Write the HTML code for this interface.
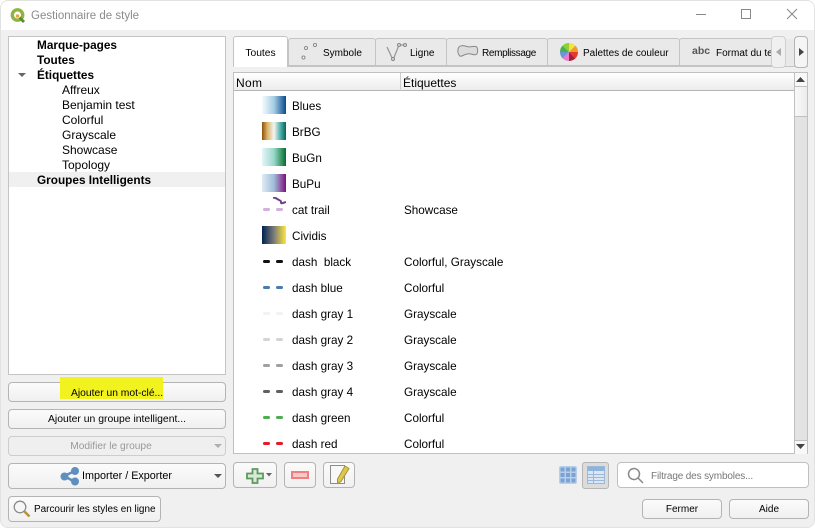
<!DOCTYPE html>
<html><head><meta charset="utf-8"><style>
html,body{margin:0;padding:0;background:#f0f0f0}
#w{position:relative;width:815px;height:528px;overflow:hidden;background:#f0f0f0;font:12px "Liberation Sans",sans-serif;color:#000}
#w div,#w svg{position:absolute}
.t{white-space:nowrap;line-height:15px}
.b{font-weight:bold;left:37px;font-size:11.8px}
.c{left:62px}
.btn{box-sizing:border-box;border:1px solid #b4b4b4;border-radius:4px;background:linear-gradient(#fbfbfb,#f0f0f0);text-align:center;white-space:nowrap}
.tab{box-sizing:border-box;height:28px;top:38px;border:1px solid #c4c4c4;border-radius:3px 3px 0 0;background:#e9e9e9;font-size:10px;line-height:30px;white-space:nowrap}
.r{left:292px;white-space:nowrap;line-height:16px;font-size:11.7px;margin-top:1px}
.l{left:404px;white-space:nowrap;line-height:16px;font-size:11.7px;margin-top:1px}
.g{left:262px;width:24px;height:18px}
.d{left:263px;height:3px;width:7px;border-radius:2px}
.d2{left:276px;height:3px;width:7px;border-radius:2px}
</style></head><body><div id="w">
<div style="left:0;top:0;width:815px;height:30px;background:#fff"></div>
<svg style="left:10px;top:8px" width="16" height="15" viewBox="0 0 16 15"><circle cx="7.500" cy="7" r="5.200" fill="#fff" stroke="#8fb440" stroke-width="3.400"/><path d="M9.500 9.500l4.500 4.500" stroke="#5e8c2c" stroke-width="2.800"/><circle cx="7.500" cy="8" r="1.800" fill="#e8a33c"/></svg>
<div class="t" style="left:31px;top:9px;color:#8b8b8b;font-size:11.5px">Gestionnaire de style</div>
<svg style="left:690px;top:8px" width="115" height="14" viewBox="0 0 115 14" fill="none" stroke="#888"><path d="M6 6.500H16"/><rect x="51.500" y="1.500" width="9" height="9"/><path d="M97 1l10 10M107 1L97 11"/></svg>

<div style="left:8px;top:36px;width:218px;height:339px;box-sizing:border-box;background:#fff;border:1px solid #c4c4c4"></div>
<div style="left:9px;top:172px;width:216px;height:15px;background:#f0f0f0"></div>
<div class="t b" style="top:38px">Marque-pages</div>
<div class="t b" style="top:53px">Toutes</div>
<div class="t b" style="top:68px">Étiquettes</div>
<svg style="left:18px;top:72px" width="8" height="6"><path d="M0 1h8L4 5z" fill="#666"/></svg>
<div class="t c" style="top:83px">Affreux</div>
<div class="t c" style="top:98px">Benjamin test</div>
<div class="t c" style="top:113px">Colorful</div>
<div class="t c" style="top:128px">Grayscale</div>
<div class="t c" style="top:143px">Showcase</div>
<div class="t c" style="top:158px">Topology</div>
<div class="t b" style="top:173px">Groupes Intelligents</div>

<div class="btn" style="left:8px;top:382px;width:218px;height:20px"></div>
<div style="left:60px;top:377px;width:103px;height:22px;background:#f2f21e"></div>
<div class="t" style="left:71px;top:386px;font-size:10.300px">Ajouter un mot-clé...</div>
<div class="btn" style="left:8px;top:409px;width:218px;height:20px;line-height:19px;font-size:10.400px">Ajouter un groupe intelligent...</div>
<div class="btn" style="left:8px;top:436px;width:218px;height:20px;line-height:20px;font-size:10.200px;color:#999;border-color:#cdcdcd;background:#efefef;padding-right:12px">Modifier le groupe</div>
<svg style="left:214px;top:444px" width="8" height="5"><path d="M0 0h8L4 4z" fill="#b0b0b0"/></svg>
<div class="btn" style="left:8px;top:463px;width:218px;height:26px"></div>
<svg style="left:60px;top:466px" width="20" height="20" viewBox="0 0 20 20"><path d="M4 10L15 5M4 10l11 6" stroke="#5f8fbf" stroke-width="2.500"/><circle cx="4.500" cy="10.500" r="4" fill="#5f8fbf"/><circle cx="15" cy="5" r="4" fill="#5f8fbf"/><circle cx="15" cy="15.500" r="4" fill="#5f8fbf"/></svg>
<div class="t" style="left:82px;top:469px;font-size:10.800px">Importer / Exporter</div>
<svg style="left:214px;top:474px" width="8" height="5"><path d="M0 0h8L4 4z" fill="#555"/></svg>
<div class="btn" style="left:8px;top:496px;width:153px;height:26px"></div>
<svg style="left:13px;top:500px" width="20" height="20" viewBox="0 0 20 20"><circle cx="7" cy="7" r="5.800" fill="#f6f6f6" stroke="#8a8a8a" stroke-width="1.300"/><path d="M11.500 11.500l5 5" stroke="#b8923c" stroke-width="2.500"/></svg>
<div class="t" style="left:34px;top:502px;font-size:9.950px">Parcourir les styles en ligne</div>

<div class="tab" style="left:288px;width:88px;padding-left:34px">Symbole</div>
<div class="tab" style="left:375px;width:72px;padding-left:34px">Ligne</div>
<div class="tab" style="left:446px;width:102px;padding-left:35px;letter-spacing:-.35px">Remplissage</div>
<div class="tab" style="left:547px;width:133px;padding-left:35px">Palettes de couleur</div>
<div class="tab" style="left:679px;width:100px;padding-left:36px">Format du te</div>
<div style="left:233px;top:66px;width:575px;height:1px;background:#c4c4c4"></div>
<div class="tab" style="left:233px;top:36px;width:55px;height:31px;background:#fff;border-bottom:0;text-align:center;line-height:34px;font-size:10.300px">Toutes</div>
<svg style="left:300px;top:42px" width="20" height="20"><g fill="#fff" stroke="#888"><circle cx="3.500" cy="15.500" r="1.500"/><circle cx="6" cy="6" r="1.500"/><circle cx="15" cy="3" r="1.500"/></g></svg>
<svg style="left:385px;top:42px" width="24" height="22" fill="none" stroke="#999"><path d="M2 5l6 13 6-15h6" stroke-width="1.300"/><g fill="#ddd" stroke="#888"><circle cx="8" cy="17" r="1.500"/><circle cx="14" cy="3" r="1.500"/><circle cx="20" cy="3" r="1.500"/></g></svg>
<svg style="left:457px;top:44px" width="22" height="15"><path d="M1 6C1 1 6 1 10 2.500S20 0 20.500 5 20 12 14 10 4 15 2 11 1 8 1 6z" fill="#dcdcdc" stroke="#888"/></svg>
<svg style="left:560px;top:43px" width="18" height="18" viewBox="0 0 18 18"><path d="M9 9V0a9 9 0 0 1 6.400 2.600z" fill="#f5e23c"/><path d="M9 9l6.400-6.400A9 9 0 0 1 18 9z" fill="#ee9a2c"/><path d="M9 9h9a9 9 0 0 1-2.600 6.400z" fill="#e8382c"/><path d="M9 9l6.400 6.400A9 9 0 0 1 9 18z" fill="#a81c3c"/><path d="M9 9v9a9 9 0 0 1-6.400-2.600z" fill="#e87cc8"/><path d="M9 9l-6.400 6.400A9 9 0 0 1 0 9z" fill="#6c94d8"/><path d="M9 9H0a9 9 0 0 1 2.600-6.400z" fill="#4cae4c"/><path d="M9 9L2.600 2.600A9 9 0 0 1 9 0z" fill="#8cd034"/></svg>
<div class="t" style="left:692px;top:44px;font-size:10.500px;font-weight:bold;color:#555">abc</div>
<div class="btn" style="left:771px;top:36px;width:15px;height:32px;background:#f0f0f0;border-color:#d0d0d0"></div>
<svg style="left:776px;top:48px" width="6" height="9"><path d="M5 0v8L0 4z" fill="#aaa"/></svg>
<div style="left:786px;top:39px;width:8px;height:27px;background:#e9e9e9"></div>
<div class="btn" style="left:794px;top:36px;width:14px;height:32px;background:#f5f5f5"></div>
<svg style="left:799px;top:48px" width="6" height="9"><path d="M0 0v8l5-4z" fill="#444"/></svg>

<div style="left:233px;top:72px;width:575px;height:382px;box-sizing:border-box;background:#fff;border:1px solid #c0c0c0"></div>
<div style="left:234px;top:73px;width:560px;height:18px;box-sizing:border-box;background:linear-gradient(#fff,#ececec);border-bottom:1px solid #b5b5b5"></div>
<div style="left:400px;top:73px;width:1px;height:18px;background:#ccc"></div>
<div class="t" style="left:236px;top:76px;letter-spacing:.3px">Nom</div>
<div class="t" style="left:403px;top:76px">Étiquettes</div>
<div style="left:794px;top:73px;width:1px;height:380px;background:#c0c0c0"></div>
<div style="left:795px;top:73px;width:12px;height:380px;background:#e3e3e3"></div>
<div style="left:795px;top:73px;width:12px;height:13px;background:#f8f8f8;border-bottom:1px solid #c0c0c0"></div>
<div style="left:795px;top:87px;width:12px;height:29px;background:linear-gradient(90deg,#f9f9f9,#ececec);border-bottom:1px solid #c0c0c0"></div>
<div style="left:795px;top:440px;width:12px;height:13px;background:#f8f8f8;border-top:1px solid #c0c0c0"></div>
<svg style="left:796px;top:77px" width="10" height="6"><path d="M0 5h9L4.500 0z" fill="#444"/></svg>
<svg style="left:796px;top:444px" width="10" height="6"><path d="M0 0h9L4.500 5z" fill="#444"/></svg>

<div class="g" style="top:96px;background:linear-gradient(90deg,#f7fbff,#a5cde3 50%,#0a4a90)"></div><div class="r" style="top:98px">Blues</div>
<div class="g" style="top:122px;background:linear-gradient(90deg,#8c510a,#d8b365 22%,#f5f5f5 50%,#5ab4ac 75%,#01665e)"></div><div class="r" style="top:124px">BrBG</div>
<div class="g" style="top:148px;background:linear-gradient(90deg,#e5f5f9,#99d8c9 50%,#006d2c)"></div><div class="r" style="top:150px">BuGn</div>
<div class="g" style="top:174px;background:linear-gradient(90deg,#e0ecf4,#9ebcda 50%,#810f7c)"></div><div class="r" style="top:176px">BuPu</div>
<svg style="left:262px;top:197px" width="24" height="8"><path d="M11 .5c3 0 4 1.500 6 2.500s2 1 2 2.500 2 .5 5 -.5" fill="none" stroke="#6f3f85" stroke-width="2"/></svg>
<div class="d" style="top:208px;background:#d4b0dc"></div><div class="d2" style="top:208px;background:#d4b0dc"></div><div class="r" style="top:202px">cat trail</div><div class="l" style="top:202px">Showcase</div>
<div class="g" style="top:226px;background:linear-gradient(90deg,#00224e,#7c7b78 50%,#fee838)"></div><div class="r" style="top:228px">Cividis</div>
<div class="d" style="top:260px;background:#111"></div><div class="d2" style="top:260px;background:#111"></div><div class="r" style="top:254px">dash&nbsp; black</div><div class="l" style="top:254px">Colorful, Grayscale</div>
<div class="d" style="top:286px;background:#4a7ab5"></div><div class="d2" style="top:286px;background:#4a7ab5"></div><div class="r" style="top:280px">dash blue</div><div class="l" style="top:280px">Colorful</div>
<div class="d" style="top:312px;background:#f2f2f2"></div><div class="d2" style="top:312px;background:#f2f2f2"></div><div class="r" style="top:306px">dash gray 1</div><div class="l" style="top:306px">Grayscale</div>
<div class="d" style="top:338px;background:#d4d4d4"></div><div class="d2" style="top:338px;background:#d4d4d4"></div><div class="r" style="top:332px">dash gray 2</div><div class="l" style="top:332px">Grayscale</div>
<div class="d" style="top:364px;background:#a0a0a0"></div><div class="d2" style="top:364px;background:#a0a0a0"></div><div class="r" style="top:358px">dash gray 3</div><div class="l" style="top:358px">Grayscale</div>
<div class="d" style="top:390px;background:#606060"></div><div class="d2" style="top:390px;background:#606060"></div><div class="r" style="top:384px">dash gray 4</div><div class="l" style="top:384px">Grayscale</div>
<div class="d" style="top:416px;background:#4cae4c"></div><div class="d2" style="top:416px;background:#4cae4c"></div><div class="r" style="top:410px">dash green</div><div class="l" style="top:410px">Colorful</div>
<div class="d" style="top:442px;background:#e41a2c"></div><div class="d2" style="top:442px;background:#e41a2c"></div><div class="r" style="top:436px">dash red</div><div class="l" style="top:436px">Colorful</div>

<div class="btn" style="left:233px;top:462px;width:44px;height:26px"></div>
<svg style="left:246px;top:468px" width="18" height="16" viewBox="0 0 18 16"><path d="M6.500 1h5v4.500H17v5h-5.500V15h-5v-4.500H1v-5h5.500z" fill="#d9e8d9" stroke="#5c9a5c" stroke-width="1.800"/></svg>
<svg style="left:266px;top:473px" width="7" height="5"><path d="M0 0h6L3 3.500z" fill="#666"/></svg>
<div class="btn" style="left:284px;top:462px;width:32px;height:26px"></div>
<div style="left:291px;top:471px;width:18px;height:8px;box-sizing:border-box;background:#f8c8c8;border:2px solid #f08080"></div>
<div class="btn" style="left:323px;top:462px;width:32px;height:26px"></div>
<svg style="left:329px;top:464px" width="22" height="22" viewBox="0 0 22 22"><path d="M1.500 1.500h14v18h-14z" fill="#f8f8f8" stroke="#8c8c8c"/><path d="M16 2l4 2.500-8 13-3.500 2 0-4.500z" fill="#dcc84a" stroke="#a89434"/></svg>
<svg style="left:559px;top:466px" width="18" height="18"><rect width="18" height="18" rx="2" fill="#b8cfe8"/><g fill="#7aa3d4"><rect x="1.500" y="1.500" width="4" height="4"/><rect x="7" y="1.500" width="4" height="4"/><rect x="12.500" y="1.500" width="4" height="4"/><rect x="1.500" y="7" width="4" height="4"/><rect x="7" y="7" width="4" height="4"/><rect x="12.500" y="7" width="4" height="4"/><rect x="1.500" y="12.500" width="4" height="4"/><rect x="7" y="12.500" width="4" height="4"/><rect x="12.500" y="12.500" width="4" height="4"/></g></svg>
<div style="left:582px;top:462px;width:27px;height:27px;box-sizing:border-box;background:#dcdcdc;border:1px solid #b5b5b5;border-radius:3px"></div>
<svg style="left:587px;top:466px" width="18" height="18"><rect x=".5" y=".5" width="17" height="17" fill="#dbe6f3" stroke="#9ab8da"/><rect x="1" y="1" width="16" height="4" fill="#8fb4dc"/><path d="M1 8.500h16M1 11.500h16M1 14.500h16M6.500 5v12" stroke="#9ab8da"/></svg>
<div class="btn" style="left:617px;top:462px;width:192px;height:26px;background:#fff;border-color:#c0c0c0"></div>
<svg style="left:627px;top:467px" width="18" height="18" fill="none" stroke="#888" stroke-width="1.500"><circle cx="7" cy="7" r="5.500"/><path d="M11 11l5 5"/></svg>
<div class="t" style="left:651px;top:469px;font-size:10px;color:#777;letter-spacing:-.15px">Filtrage des symboles...</div>

<div class="btn" style="left:642px;top:499px;width:80px;height:20px;line-height:20px;font-size:10px">Fermer</div>
<div class="btn" style="left:729px;top:499px;width:80px;height:20px;line-height:20px;font-size:10px">Aide</div>
<div style="left:0;top:0;width:815px;height:528px;box-sizing:border-box;border:1px solid #e2e2e2;border-radius:8px;box-shadow:0 0 0 8px #fff"></div>
</div></body></html>
